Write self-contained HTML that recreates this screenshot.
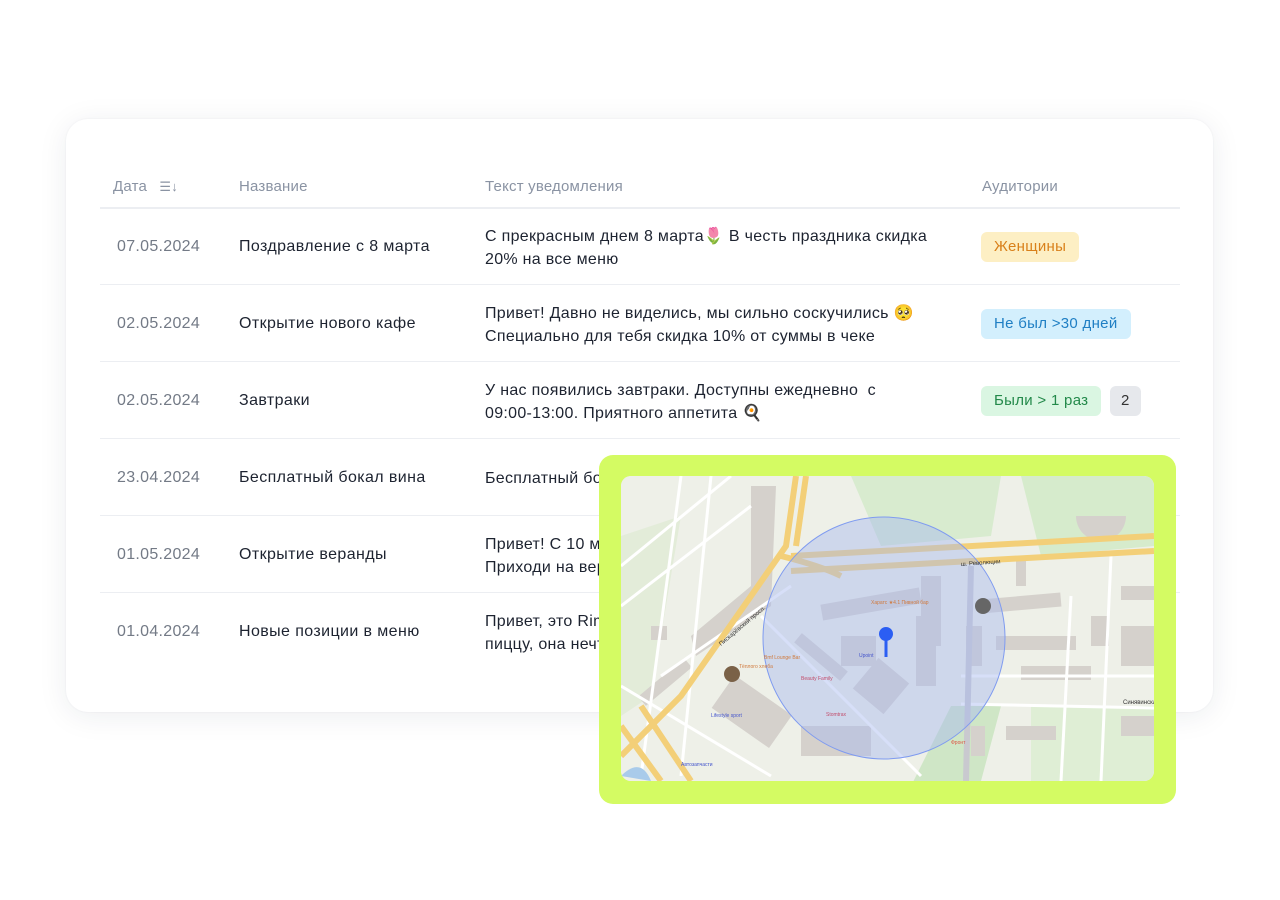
<!DOCTYPE html>
<html><head><meta charset="utf-8">
<style>
*{margin:0;padding:0;box-sizing:border-box}
body{width:1280px;height:900px;background:#fff;font-family:"Liberation Sans","DejaVu Sans",sans-serif;position:relative;overflow:hidden}
.card{position:absolute;left:66px;top:119px;width:1147px;height:593px;background:#fff;border-radius:22px;box-shadow:0 4px 30px rgba(30,40,60,.08),0 0 2px rgba(30,40,60,.06)}
.hdr{position:absolute;top:178px;font-size:15px;color:#8a93a3;letter-spacing:.2px}
.line{position:absolute;left:100px;width:1080px;height:1px;background:#eceef2}
.hline{position:absolute;left:100px;width:1080px;height:2px;background:#eceef2;top:207px}
.d{position:absolute;left:117px;font-size:16px;color:#737a86;letter-spacing:.3px}
.n{position:absolute;left:239px;font-size:16px;color:#1d2330;letter-spacing:.4px}
.t{position:absolute;left:485px;font-size:16px;color:#1d2330;line-height:23px;letter-spacing:.3px}
.tag{position:absolute;left:981px;height:30px;line-height:30px;padding:0 13px;border-radius:6px;font-size:15px;letter-spacing:.3px}
</style></head><body>
<div class="card"></div>
<div class="hdr" style="left:113px">Дата <span style="margin-left:8px;font-size:13px">☰↓</span></div>
<div class="hdr" style="left:239px">Название</div>
<div class="hdr" style="left:485px">Текст уведомления</div>
<div class="hdr" style="left:982px">Аудитории</div>
<div class="hline"></div>
<div class="line" style="top:284px"></div>
<div class="line" style="top:361px"></div>
<div class="line" style="top:438px"></div>
<div class="line" style="top:515px"></div>
<div class="line" style="top:592px"></div>

<div class="d" style="top:238px">07.05.2024</div><div class="n" style="top:238px">Поздравление с 8 марта</div>
<div class="t" style="top:225px">С прекрасным днем 8 марта🌷 В честь праздника скидка<br>20% на все меню</div>
<div class="tag" style="top:232px;background:#fdefc4;color:#d9801a">Женщины</div>

<div class="d" style="top:315px">02.05.2024</div><div class="n" style="top:315px">Открытие нового кафе</div>
<div class="t" style="top:302px">Привет! Давно не виделись, мы сильно соскучились 🥺<br>Специально для тебя скидка 10% от суммы в чеке</div>
<div class="tag" style="top:309px;background:#d3effd;color:#1f7fc4">Не был &gt;30 дней</div>

<div class="d" style="top:392px">02.05.2024</div><div class="n" style="top:392px">Завтраки</div>
<div class="t" style="top:379px">У нас появились завтраки. Доступны ежедневно&nbsp; с<br>09:00-13:00. Приятного аппетита 🍳</div>
<div class="tag" style="top:386px;background:#daf6e2;color:#23894a">Были &gt; 1 раз</div>
<div class="tag" style="top:386px;left:1110px;padding:0 11px;background:#e6e8ec;color:#333">2</div>

<div class="d" style="top:469px">23.04.2024</div><div class="n" style="top:469px">Бесплатный бокал вина</div>
<div class="t" style="top:467px">Бесплатный бокал</div>
<div class="d" style="top:546px">01.05.2024</div><div class="n" style="top:546px">Открытие веранды</div>
<div class="t" style="top:533px">Привет! С 10 мая<br>Приходи на веранду</div>
<div class="d" style="top:623px">01.04.2024</div><div class="n" style="top:623px">Новые позиции в меню</div>
<div class="t" style="top:610px">Привет, это Rimini<br>пиццу, она нечто</div>

<div style="position:absolute;left:599px;top:455px;width:577px;height:349px;background:#d4fb63;border-radius:14px"></div>
<div style="position:absolute;left:621px;top:476px;width:533px;height:305px;border-radius:10px;overflow:hidden;background:#eff0ea">
<svg width="533" height="305" viewBox="0 0 533 305" font-family="Liberation Sans" font-size="5">
<rect width="533" height="305" fill="#eef0e8"/>
<path d="M230 0 L380 0 L370 60 L260 70 Z" fill="#d8ebcf"/>
<path d="M400 0 L533 0 L533 70 L420 80 Z" fill="#d6ebcc"/>
<path d="M280 330 L330 230 L380 230 L360 305 Z" fill="#cfe6c6"/>
<path d="M410 230 L533 230 L533 305 L410 305 Z" fill="#dfeed5"/>
<path d="M0 60 L60 40 L30 220 L0 240Z" fill="#e3ecd9"/>
<g fill="#d5d1cc">
<path d="M130 10 L155 10 L150 130 L75 180 L70 160 L130 110Z"/>
<rect x="30" y="150" width="16" height="14"/>
<rect x="14" y="200" width="60" height="12" transform="rotate(-40 44 206)"/>
<rect x="200" y="120" width="100" height="16" transform="rotate(-10 250 128)"/>
<rect x="220" y="160" width="35" height="30"/>
<rect x="240" y="190" width="40" height="40" transform="rotate(40 260 210)"/>
<rect x="96" y="215" width="70" height="40" transform="rotate(35 130 235)"/>
<rect x="180" y="250" width="70" height="30"/>
<rect x="170" y="175" width="60" height="12" transform="rotate(40 200 181)"/>
<rect x="295" y="140" width="20" height="70"/>
<rect x="360" y="120" width="80" height="14" transform="rotate(-5 400 127)"/>
<rect x="345" y="150" width="16" height="40"/>
<rect x="375" y="160" width="80" height="14"/>
<rect x="400" y="190" width="70" height="14"/>
<rect x="500" y="150" width="33" height="40"/>
<rect x="500" y="110" width="33" height="14"/>
<rect x="470" y="140" width="18" height="30"/>
<rect x="500" y="240" width="33" height="20"/>
<rect x="385" y="250" width="50" height="14"/>
<rect x="350" y="250" width="14" height="30"/>
<rect x="395" y="80" width="10" height="30"/>
<path d="M455 40 a24 24 0 1 0 50 0 Z" />
<rect x="300" y="100" width="20" height="70"/>
</g>
<g stroke="#fff" stroke-width="3" fill="none">
<path d="M0 90 L110 0"/><path d="M0 130 L130 30"/><path d="M40 200 L170 110"/>
<path d="M60 0 L20 300"/><path d="M90 0 L60 300"/><path d="M0 210 L150 300"/>
<path d="M340 200 L533 200"/><path d="M340 228 L533 232"/><path d="M450 120 L440 305"/>
<path d="M490 80 L480 305"/><path d="M140 140 L300 300"/>
</g>
<g fill="none" stroke="#f3cf78" stroke-width="6">
<path d="M175 0 L165 70 L60 220 L0 280"/>
<path d="M185 0 L175 70"/>
<path d="M170 80 L533 60"/>
<path d="M170 95 L533 75"/>
<path d="M160 80 Q200 90 220 100"/>
<path d="M20 230 L70 305"/><path d="M0 250 L40 305"/>
</g>
<path d="M350 90 L345 305" stroke="#c9c9cf" stroke-width="6"/>
<circle cx="263" cy="162" r="121" fill="#a7b8f0" fill-opacity=".45" stroke="#7f9bf0" stroke-width="1"/>
<line x1="265" y1="160" x2="265" y2="181" stroke="#2b5ef3" stroke-width="3"/>
<circle cx="265" cy="158" r="7" fill="#2b5ef3"/>
<g font-size="6" fill="#333"><text x="340" y="90" transform="rotate(-4 340 90)">ш. Революции</text><text x="100" y="170" transform="rotate(-40 100 170)">Пискарёвский просп.</text><text x="502" y="228">Синявинская ул.</text></g>
<g font-size="5" fill="#d07a3e"><text x="250" y="128">Харатс ★4.1 Пивной бар</text><text x="143" y="183">Bmf Lounge Bar</text><text x="118" y="192">Тёплого хлеба</text><text x="180" y="204" fill="#c24d6c">Beauty Family</text><text x="205" y="240" fill="#c24d6c">Stomtrax</text><text x="330" y="268" fill="#d54">Фронт</text></g>
<g font-size="5" fill="#4455cc"><text x="238" y="181">Upoint</text><text x="90" y="241">Lifestyle sport</text><text x="60" y="290">Автозапчасти</text></g>
<circle cx="111" cy="198" r="8" fill="#7a6147"/><circle cx="362" cy="130" r="8" fill="#666"/>
<path d="M0 300 Q20 280 30 305Z" fill="#a9cbea"/>
</svg></div>
</body></html>
